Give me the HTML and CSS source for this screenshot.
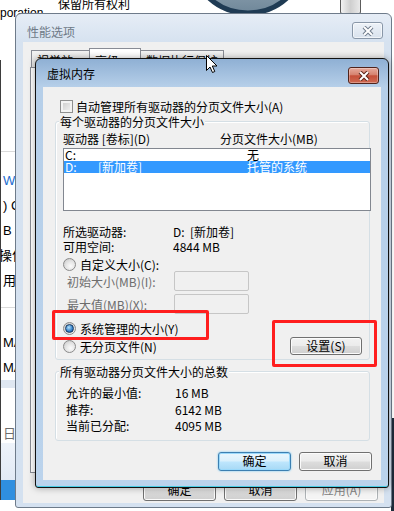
FILE: index.html
```html
<!DOCTYPE html>
<html lang="zh-CN">
<head>
    <meta charset="UTF-8">
    <title>虚拟内存</title>
    <link rel="stylesheet" href="styles.css">
</head>
<body>
<div class="desktop">
    <span class="about-corp">poration</span>
    <span class="about-rights">保留所有权利</span>
    <svg class="orb" width="140" height="80" viewBox="0 0 140 80">
        <defs>
            <linearGradient id="orbFill" x1="0" y1="0" x2="0" y2="1">
                <stop offset="0" stop-color="#e4ebf1"/>
                <stop offset="1" stop-color="#6f8799"/>
            </linearGradient>
        </defs>
        <circle cx="68" cy="16" r="58" fill="url(#orbFill)" stroke="#1f3b54" stroke-width="5"/>
    </svg>
    <div class="scroll-thumb"></div>

    <div class="back-app">
        <div class="back-top"></div>
        <div class="back-row link">Windows</div>
        <div class="back-row">) Core</div>
        <div class="back-row">B</div>
        <div class="back-row shift">操作系统</div>
        <div class="back-row">用于</div>
        <div class="back-sep"></div>
        <div class="back-row tall">MAC</div>
        <div class="back-row">MAC</div>
        <div class="back-band"></div>
        <div class="back-row date">日期</div>
        <div class="back-foot"></div>
        <div class="back-task"></div>
    </div>
    <div class="edge-strip"></div>

    <!-- outer window: 性能选项 -->
    <div class="window perf">
        <div class="title-bar">
            <span class="title">性能选项</span>
            <span class="close inactive">
                <svg width="12" height="10" viewBox="0 0 12 10"><path d="M2 1 L10 9 M10 1 L2 9" class="x-out"/><path d="M2 1 L10 9 M10 1 L2 9" class="x-in"/></svg>
            </span>
        </div>
        <div class="client">
            <div class="tabs">
                <div class="tab">视觉效果</div>
                <div class="tab active">高级</div>
                <div class="tab">数据执行保护</div>
            </div>
            <div class="tab-panel"></div>
            <div class="button-row outer-buttons">
                <button class="btn tall">确定</button>
                <button class="btn tall">取消</button>
                <button class="btn tall disabled">应用(A)</button>
            </div>
        </div>
    </div>

    <!-- dialog: 虚拟内存 -->
    <div class="window vm">
        <div class="title-bar">
            <span class="title">虚拟内存</span>
            <span class="close">
                <svg width="12" height="10" viewBox="0 0 12 10"><path d="M2 1 L10 9 M10 1 L2 9" class="x-out red"/><path d="M2 1 L10 9 M10 1 L2 9" class="x-in"/></svg>
            </span>
        </div>
        <div class="client vm-body">
            <div class="check-row">
                <span class="check"></span>
                <span>自动管理所有驱动器的分页文件大小(A)</span>
            </div>

            <div class="group drives">
                <span class="group-title">每个驱动器的分页文件大小</span>
                <div class="col-head">
                    <span class="col-drive">驱动器 [卷标](D)</span>
                    <span>分页文件大小(MB)</span>
                </div>
                <div class="listbox">
                    <div class="list-row">
                        <span class="c1">C:</span><span class="c2"></span><span>无</span>
                    </div>
                    <div class="list-row selected">
                        <span class="c1">D:</span><span class="c2">[新加卷]</span><span>托管的系统</span>
                    </div>
                </div>
                <div class="info">
                    <div class="info-row"><span class="info-label">所选驱动器:</span><span>D:&nbsp;&nbsp;[新加卷]</span></div>
                    <div class="info-row"><span class="info-label">可用空间:</span><span>4844 MB</span></div>
                </div>
                <div class="radio-row custom">
                    <span class="radio"></span>
                    <span>自定义大小(C):</span>
                </div>
                <div class="size-row">
                    <span class="size-label">初始大小(MB)(I):</span>
                    <span class="field"></span>
                </div>
                <div class="size-row second">
                    <span class="size-label">最大值(MB)(X):</span>
                    <span class="field"></span>
                </div>
                <div class="radio-row system">
                    <span class="radio on"></span>
                    <span>系统管理的大小(Y)</span>
                </div>
                <div class="last-row">
                    <div class="radio-row">
                        <span class="radio"></span>
                        <span>无分页文件(N)</span>
                    </div>
                    <button class="btn set">设置(S)</button>
                </div>
            </div>

            <div class="group totals">
                <span class="group-title">所有驱动器分页文件大小的总数</span>
                <div class="total-rows">
                    <div class="total-row"><span class="total-label">允许的最小值:</span><span>16 MB</span></div>
                    <div class="total-row"><span class="total-label">推荐:</span><span>6142 MB</span></div>
                    <div class="total-row"><span class="total-label">当前已分配:</span><span>4095 MB</span></div>
                </div>
            </div>

            <div class="button-row vm-buttons">
                <button class="btn default">确定</button>
                <button class="btn">取消</button>
            </div>
        </div>
    </div>

    <div class="mark mark-radio"></div>
    <div class="mark mark-btn"></div>

    <svg class="cursor" width="13" height="19" viewBox="0 0 13 19">
        <path d="M0.5 0.5 L0.5 15.5 L4 12 L6.5 17.5 L8.8 16.5 L6.3 11 L11 11 Z" fill="#fff" stroke="#000" stroke-width="1" stroke-linejoin="miter"/>
    </svg>
</div>
</body>
</html>
```

FILE: styles.css
```css
* {
    margin: 0;
    padding: 0;
    box-sizing: border-box;
}

body {
    width: 394px;
    height: 511px;
    overflow: hidden;
    background: #fff;
    font-family: "Noto Sans CJK SC", sans-serif;
    font-size: 12px;
    color: #000;
}

.desktop {
    position: relative;
    width: 394px;
    height: 511px;
    overflow: hidden;
    background: #fff;
}

/* things behind the windows */
.about-corp {
    position: absolute;
    left: 0;
    top: 6px;
    font-family: "Liberation Sans", sans-serif;
    font-size: 12px;
    line-height: 14px;
    white-space: nowrap;
}

.about-rights {
    position: absolute;
    left: 58px;
    top: -3px;
    line-height: 14px;
    white-space: nowrap;
}

.orb {
    position: absolute;
    left: 180px;
    top: -61px;
}

.scroll-thumb {
    position: absolute;
    left: 340px;
    top: -3px;
    width: 21px;
    height: 17px;
    border: 1px solid #5c5c5c;
    border-radius: 2px;
    background: linear-gradient(90deg, #f2f2f2, #cfcfcf 50%, #e9e9e9);
}

.back-app {
    position: absolute;
    left: 0;
    top: 60px;
    width: 80px;
    height: 440px;
    border-left: 1px solid #3d3d3d;
    display: flex;
    flex-direction: column;
    white-space: nowrap;
    overflow: hidden;
}

.back-top {
    height: 92px;
    border-bottom: 1px solid #dadada;
    flex: none;
}

.back-row {
    height: 25px;
    line-height: 25px;
    padding-left: 2px;
    font-family: "Liberation Sans", "Noto Sans CJK SC", sans-serif;
    font-size: 13px;
    flex: none;
}

.back-row.link {
    margin-top: 16px;
    color: #1c6dd0;
}

.back-row.shift {
    text-indent: -4px;
}

.back-sep {
    margin-top: 14px;
    border-bottom: 1px solid #dadada;
    flex: none;
}

.back-row.tall {
    margin-top: 22px;
}

.back-band {
    height: 8px;
    background: #dfe7f1;
    flex: none;
}

.back-row.date {
    margin-top: 37px;
    height: 18px;
    line-height: 18px;
    color: #6d6d6d;
}

.back-foot {
    height: 37px;
    background: linear-gradient(#eef3fa, #e2eaf5);
    flex: none;
}

.back-task {
    height: 20px;
    background: #2f8fe0;
    flex: none;
}

.edge-strip {
    position: absolute;
    left: 391px;
    top: 418px;
    width: 3px;
    height: 93px;
    background: #1d2b3a;
}

/* windows */
.window {
    position: absolute;
    display: flex;
    flex-direction: column;
    border: 1px solid;
    border-radius: 6px 6px 3px 3px;
}

.perf {
    left: 15px;
    top: 13px;
    width: 377px;
    height: 495px;
    z-index: 1;
    border-color: #6e7b8a;
    background: linear-gradient(#e6edf6, #d6e2f0 28px, #d4e1f0);
}

.vm {
    left: 35px;
    top: 58px;
    width: 354px;
    height: 430px;
    z-index: 2;
    border-color: #111;
    background: linear-gradient(#8fb0d4, #b6cfe9 28px, #bbd3ec);
    box-shadow: 0 0 7px rgba(0, 0, 0, 0.35), inset 0 -1px 0 #48cbe3;
}

.title-bar {
    display: flex;
    align-items: flex-start;
    height: 28px;
    padding-left: 11px;
    flex: none;
}

.title {
    line-height: 14px;
    font-size: 12px;
}

.perf .title {
    margin-top: 11px;
    color: #6e7a87;
}

.vm .title {
    margin-top: 8px;
}

.close {
    margin-left: auto;
    margin-top: 8px;
    width: 31px;
    height: 17px;
    border: 1px solid #50231b;
    border-radius: 3px;
    display: flex;
    align-items: center;
    justify-content: center;
    background: linear-gradient(#e6ab9d, #d6826f 45%, #c54f39 52%, #cf6a52);
    box-shadow: inset 0 0 0 1px rgba(255, 255, 255, 0.3);
}

.perf .close {
    margin-right: 8px;
}

.vm .close {
    margin-right: 9px;
}

.close.inactive {
    border-color: #8997a8;
    background: linear-gradient(#edf2f8, #d9e2ed);
    box-shadow: inset 0 0 0 1px rgba(255, 255, 255, 0.6);
}

.x-out {
    stroke: #6f7c8c;
    stroke-width: 4;
    fill: none;
}

.x-out.red {
    stroke: #5b2419;
}

.x-in {
    stroke: #fff;
    stroke-width: 2;
    fill: none;
}

.client {
    margin: 0 7px;
    background: #f0f0f0;
}

.perf .client {
    height: 461px;
    display: flex;
    flex-direction: column;
}

/* outer window tabs */
.tabs {
    display: flex;
    align-items: flex-end;
    height: 19px;
    margin-top: 6px;
    padding-left: 8px;
}

.tab {
    height: 17px;
    padding: 2px 5px 0;
    border: 1px solid #898c95;
    border-bottom: none;
    background: linear-gradient(#f3f3f3, #e3e3e3);
    line-height: 15px;
    margin-right: -1px;
}

.tab:first-child {
    width: 59px;
}

.tab.active {
    height: 20px;
    width: 52px;
    background: #fff;
    position: relative;
    margin-bottom: -1px;
    padding-top: 4px;
}

.tab-panel {
    height: 406px;
    margin: 0 8px 0 7px;
    border: 1px solid #898c95;
    background: #fff;
}

.button-row {
    display: flex;
    justify-content: flex-end;
    gap: 8px;
}

.outer-buttons {
    margin-top: 5px;
    padding-right: 6px;
}

.btn {
    width: 73px;
    height: 19px;
    border: 1px solid #707070;
    border-radius: 3px;
    background: linear-gradient(#f2f2f2, #ebebeb 48%, #dddddd 52%, #cfcfcf);
    box-shadow: inset 0 0 0 1px #fbfbfb;
    font: inherit;
    font-size: 12px;
    line-height: 1;
    color: #000;
    display: flex;
    align-items: center;
    justify-content: center;
}

.btn.tall {
    height: 23px;
}

.btn.disabled {
    border-color: #adb2b5;
    background: #f4f4f4;
    color: #838383;
}

.btn.default {
    border-color: #3c7fb1;
    background: linear-gradient(#eaf6fd, #d9f0fc 48%, #bee6fd 52%, #a7d9f5);
    box-shadow: inset 0 0 0 1px #9ad9fb, 0 0 2px #5bc2f5;
}

/* virtual memory dialog body */
.vm-body {
    height: 393px;
    padding: 13px 11px 0 12px;
    display: flex;
    flex-direction: column;
}

.check-row {
    display: flex;
    align-items: center;
    gap: 3px;
    height: 13px;
    padding-left: 5px;
    line-height: 13px;
}

.check {
    width: 13px;
    height: 13px;
    border: 1px solid #8e8f8f;
    background: linear-gradient(135deg, #c9c9c9, #f5f5f5);
    box-shadow: inset 0 0 0 2px #f3f3f3;
    flex: none;
}

.group {
    display: flex;
    flex-direction: column;
    border: 1px solid #d5dfe5;
    border-radius: 3px;
    box-shadow: inset 1px 1px 0 #fff;
}

.group-title {
    align-self: flex-start;
    margin: -7px 0 0 3px;
    padding: 0 1px;
    line-height: 13px;
    background: #f0f0f0;
}

.drives {
    margin-top: 8px;
    padding-bottom: 4px;
}

.col-head {
    display: flex;
    margin-top: 4px;
    padding-left: 7px;
    line-height: 14px;
}

.col-drive {
    width: 157px;
}

.listbox {
    margin: 2px 0 0 7px;
    width: 308px;
    height: 63px;
    border: 1px solid #828790;
    background: #fff;
}

.list-row {
    display: flex;
    height: 12px;
    line-height: 12px;
    padding-left: 1px;
    white-space: nowrap;
}

.list-row.selected {
    background: #3399ff;
    color: #fff;
}

.c1 {
    width: 33px;
}

.c2 {
    width: 149px;
}

.info {
    margin-top: 13px;
    padding-left: 7px;
}

.info-row {
    display: flex;
    line-height: 15px;
}

.info-label {
    width: 110px;
}

.radio-row {
    display: flex;
    align-items: center;
    gap: 4px;
    height: 14px;
    padding-left: 7px;
}

.radio-row.custom {
    margin-top: 3px;
}

.radio-row.system {
    margin-top: 7px;
}

.radio {
    width: 13px;
    height: 13px;
    border-radius: 50%;
    border: 1px solid #8b8b8b;
    background: radial-gradient(circle at 60% 65%, #fbfbfb 0, #e6e6e6 45%, #c4c4c4 100%);
    display: flex;
    align-items: center;
    justify-content: center;
    flex: none;
}

.radio.on::after {
    content: "";
    width: 7px;
    height: 7px;
    border-radius: 50%;
    border: 1px solid #17375e;
    background: radial-gradient(circle at 40% 35%, #b7e3fb, #2f7dc8 60%, #113f7a);
}

.size-row {
    display: flex;
    align-items: center;
    height: 20px;
    color: #6d6d6d;
}

.size-row.second {
    margin-top: 3px;
}

.size-label {
    width: 118px;
    padding-left: 11px;
}

.field {
    width: 75px;
    height: 20px;
    border: 1px solid #c6c6c6;
    border-radius: 2px;
    background: #f0f0f0;
}

.last-row {
    display: flex;
    align-items: center;
    justify-content: space-between;
    height: 18px;
    margin-top: 2px;
    padding-right: 7px;
}

.btn.set {
    width: 72px;
    height: 18px;
}

.totals {
    margin-top: 11px;
    padding-bottom: 5px;
}

.total-rows {
    margin-top: 7px;
    padding-left: 10px;
}

.total-row {
    display: flex;
    line-height: 16.5px;
}

.total-label {
    width: 109px;
}

.vm-buttons {
    margin: 11px -2px 0 0;
}

/* annotations and pointer over everything */
.mark {
    position: absolute;
    z-index: 3;
    border: 3px solid #ff1e1e;
    border-radius: 2px;
}

.mark-radio {
    left: 52px;
    top: 310px;
    width: 157px;
    height: 30px;
}

.mark-btn {
    left: 272px;
    top: 320px;
    width: 105px;
    height: 47px;
}

.cursor {
    position: absolute;
    z-index: 4;
    left: 206px;
    top: 55px;
}
```
